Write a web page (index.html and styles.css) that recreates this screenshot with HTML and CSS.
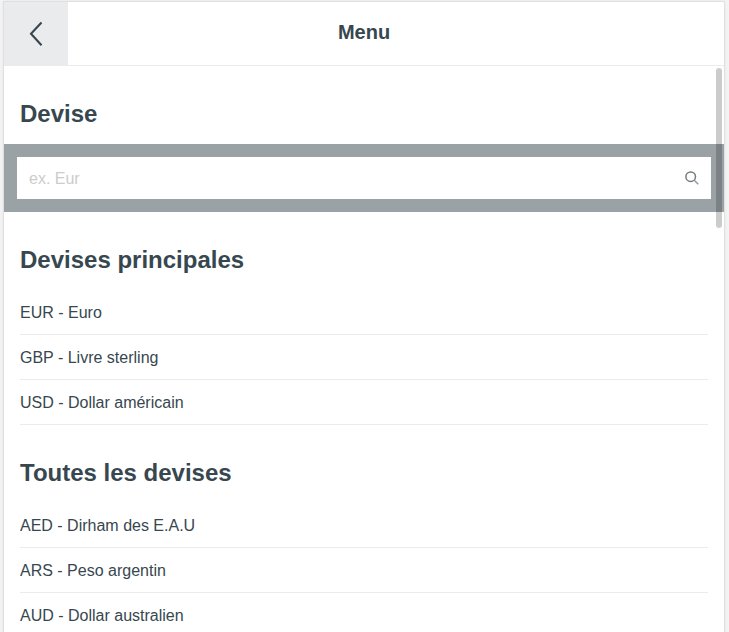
FILE: index.html
```html
<!DOCTYPE html>
<html lang="fr">
<head>
<meta charset="utf-8">
<title>Menu</title>
<link rel="stylesheet" href="styles.css">
</head>
<body>
<main class="panel">
<header class="header">
<button class="back" aria-label="Retour"><svg width="14" height="26" viewBox="0 0 14 26"><path d="M12.5 1.5 2 12.8l10.5 11.5"/></svg></button>
<h1 class="title">Menu</h1>
</header>
<div class="content">
<h2 class="heading">Devise</h2>
<div class="search"><div class="field"><input class="input" placeholder="ex. Eur" aria-label="Devise"><svg class="glass" width="16" height="16" viewBox="0 0 16 16"><circle cx="6.7" cy="6.7" r="4.8"/><path class="handle" d="m10.3 10.3 4 4"/></svg></div></div>
<h2 class="heading">Devises principales</h2>
<ul class="list"><li>EUR - Euro</li><li>GBP - Livre sterling</li><li>USD - Dollar américain</li></ul>
<h2 class="heading">Toutes les devises</h2>
<ul class="list"><li>AED - Dirham des E.A.U</li><li>ARS - Peso argentin</li><li>AUD - Dollar australien</li></ul>
</div>
<div class="scrollbar"></div>
</main>
</body>
</html>
```

FILE: styles.css
```css
* { box-sizing: border-box; }
body { margin: 0; height: 632px; overflow: hidden; background: #f4f4f4; color: #37474f; font-family: "Liberation Sans", Arial, sans-serif; }
.panel { position: relative; width: 722px; height: 640px; margin: 1px 0 0 3px; border: 1px solid #dfe0e1; background: #fff; box-shadow: 0 0 4px rgba(0,0,0,.06); }
.header { display: flex; height: 64px; border-bottom: 1px solid #e9ebec; }
.back { width: 64px; height: 64px; padding: 0; border: 0; background: #eaebed; display: flex; align-items: center; justify-content: center; }
svg { fill: none; stroke: #37474f; stroke-width: 2.1; }
.title { flex: 1; margin: 0; padding-right: 64px; text-align: center; font-size: 20px; line-height: 60px; }
.heading { margin: 0; padding: 32px 16px 14px; font-size: 24px; line-height: 32px; }
.search { height: 68px; padding: 13px; background: #9aa2a5; }
.field { height: 42px; display: flex; align-items: center; padding: 0 11px 0 12px; background: #fff; }
.input { flex: 1; border: 0; padding: 2px 0 0; outline: 0; font: 16px "Liberation Sans", Arial, sans-serif; }
.input::placeholder { color: #ccc; opacity: 1; }
.glass { stroke: #717b80; stroke-width: 1.5; }
.handle { stroke: #949b9f; }
.list { list-style: none; margin: 0; padding: 0 16px; }
.list li { height: 45px; border-bottom: 1px solid #e9ebec; font-size: 16px; line-height: 46px; }
.scrollbar { position: absolute; top: 66px; right: 2px; width: 6px; height: 160px; border-radius: 3px; background: rgba(0,0,0,.2); }
```
